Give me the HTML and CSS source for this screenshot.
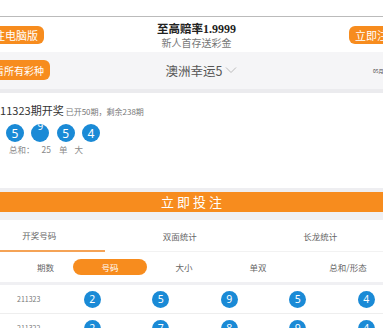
FILE: index.html
```html
<!DOCTYPE html>
<html lang="zh-CN">
<head>
  <meta charset="UTF-8">
  <meta name="viewport" content="width=device-width, initial-scale=1.0">
  <title>澳洲幸运5</title>
  <link rel="stylesheet" href="styles.css">
</head>
<body>
  <div class="page">
    <div class="top-gap"></div>
    <header class="head">
      <div class="cell-left"><a class="btn btn-pc" href="javascript:;">注电脑版</a></div>
      <div class="slogan">
        <b>至高赔率<span class="num">1.9999</span></b>
        <span class="sub">新人首存送彩金</span>
      </div>
      <div class="cell-right"><a class="btn btn-reg" href="javascript:;">立即注册</a></div>
    </header>

    <div class="lot-bar">
      <div class="cell-left"><a class="btn btn-all" href="javascript:;">看所有彩种</a></div>
      <div class="lot-name">澳洲幸运5
        <svg width="12" height="8" viewBox="0 0 12 8"><path d="M1 1.5 L6 6.5 L11 1.5" fill="none" stroke="#bbb" stroke-width="1"/></svg>
      </div>
      <div class="date">05月</div>
    </div>

    <section class="draw">
      <div class="draw-title"><span class="issue">211323期开奖</span><span class="count">已开50期，剩余238期</span></div>
      <div class="draw-balls">
        <span class="ball">5</span>
        <span class="ball roll"><i>9</i></span>
        <span class="ball">5</span>
        <span class="ball">4</span>
      </div>
      <div class="draw-sum">
        <span>总和：</span><span>25</span><span>单</span><span>大</span>
      </div>
    </section>

    <div class="bet">立即投注</div>

    <nav class="tabs">
      <a class="tab on" href="javascript:;"><span>开奖号码</span></a>
      <a class="tab" href="javascript:;"><span>双面统计</span></a>
      <a class="tab" href="javascript:;"><span>长龙统计</span></a>
    </nav>

    <div class="sub-tabs">
      <span class="st first">期数</span>
      <span class="st"><em class="pill">号码</em></span>
      <span class="st">大小</span>
      <span class="st">单双</span>
      <span class="st last">总和/形态</span>
    </div>

    <div class="rows">
      <div class="row">
        <span class="period">211323</span>
        <span class="cell"><b class="ball sm">2</b></span>
        <span class="cell"><b class="ball sm">5</b></span>
        <span class="cell"><b class="ball sm">9</b></span>
        <span class="cell"><b class="ball sm">5</b></span>
        <span class="cell"><b class="ball sm">4</b></span>
      </div>
      <div class="row">
        <span class="period">211322</span>
        <span class="cell"><b class="ball sm">2</b></span>
        <span class="cell"><b class="ball sm">7</b></span>
        <span class="cell"><b class="ball sm">8</b></span>
        <span class="cell"><b class="ball sm">9</b></span>
        <span class="cell"><b class="ball sm">4</b></span>
      </div>
    </div>
  </div>
</body>
</html>
```

FILE: styles.css
```css
*{
  margin:0;
  padding:0;
  box-sizing:border-box;
}
html,body{
  width:383px;
  overflow:hidden;
  background:#fff;
}
body{
  font-family:"Noto Sans CJK SC","Noto Sans",sans-serif;
  color:#333;
}
a{
  text-decoration:none;
  color:inherit;
}
.top-gap{
  height:17px;
  border-bottom:1px solid #bbb;
}
.btn{
  display:flex;
  align-items:center;
  justify-content:center;
  background:#f78c1e;
  color:#fff;
  border-radius:6px;
  white-space:nowrap;
}

/* header */
.head{
  display:grid;
  grid-template-columns:44px 1fr 34px;
  align-items:center;
  height:35px;
}
.btn-pc{
  width:56px;
  height:18px;
  margin-left:-12px;
  font-size:11px;
}
.btn-reg{
  width:56px;
  height:18px;
  font-size:11px;
}
.slogan{
  display:flex;
  flex-direction:column;
  align-items:center;
  line-height:14px;
  padding-top:1px;
}
.slogan b{
  font-size:11.5px;
  color:#222;
}
.slogan .num{
  font-family:"Liberation Serif",serif;
  font-size:12px;
}
.slogan .sub{
  font-size:10px;
  color:#777;
}

/* lottery bar */
.lot-bar{
  display:grid;
  grid-template-columns:50px 1fr 30px;
  align-items:center;
  height:41px;
  padding-bottom:1px;
  background:#f5f5f7;
  border-bottom:4px solid #ebebee;
}
.btn-all{
  width:62px;
  height:20px;
  margin-left:-12px;
  font-size:10px;
}
.lot-name{
  display:flex;
  align-items:center;
  justify-content:center;
  gap:3px;
  font-size:12.5px;
  color:#555;
}
.date{
  font-size:5px;
  color:#444;
  padding-left:20px;
  white-space:nowrap;
}

/* draw panel */
.draw{
  height:99px;
  padding-top:9px;
  border-bottom:4px solid #eeeef1;
}
.draw-title{
  display:flex;
  align-items:baseline;
  gap:2px;
  margin-left:-6px;
  white-space:nowrap;
}
.issue{
  font-size:11px;
  color:#333;
}
.count{
  font-size:8px;
  color:#777;
}
.draw-balls{
  display:flex;
  gap:7.3px;
  padding-left:6px;
  margin-top:6px;
}
.ball{
  display:flex;
  align-items:center;
  justify-content:center;
  width:18px;
  height:18px;
  border-radius:50%;
  background:#1a8ad6;
  color:#fff;
  font-size:12px;
  font-weight:normal;
  overflow:hidden;
  font-family:"Noto Sans",sans-serif;
}
.ball.roll i{
  font-style:normal;
  font-size:10px;
  transform:translateY(-7px);
}
.draw-sum{
  display:flex;
  gap:7px;
  padding-left:9px;
  margin-top:1px;
  font-size:8.5px;
  color:#888;
}
.draw-sum span:nth-child(2){
  margin-right:1px;
}

/* bet bar */
.bet{
  height:20px;
  background:#f78c1e;
  color:#fff;
  font-size:13px;
  letter-spacing:3px;
  text-align:center;
  line-height:20px;
  text-indent:3px;
}

/* tabs */
.tabs{
  display:grid;
  grid-template-columns:repeat(3,140.5px);
  margin-left:-31px;
  border-top:8px solid #f0f0f3;
  background:#fff;
}
.tab{
  display:flex;
  flex-direction:column;
  justify-content:center;
  height:32px;
  font-size:8.5px;
  color:#666;
  text-align:center;
  border-bottom:1px solid #f2f2f2;
}
.tab.on{
  border-bottom:2px solid #f5a356;
  margin-right:5px;
  padding-left:5px;
}

/* sub tabs */
.sub-tabs{
  display:grid;
  grid-template-columns:73px 74px 74px 74px 1fr;
  align-items:center;
  height:33px;
  border-bottom:3px solid #f0f0f3;
  font-size:8.5px;
  color:#666;
}
.st{
  text-align:center;
}
.st.first,
.st.last{
  padding-left:18px;
}
.pill{
  display:block;
  height:16px;
  line-height:16px;
  border-radius:8px;
  background:#f78c1e;
  color:#fff;
  font-style:normal;
}

/* result rows */
.row{
  display:grid;
  grid-template-columns:58px repeat(5,68.5px);
  align-items:center;
  height:29px;
  border-bottom:1px solid #eee;
}
.period{
  padding-left:17px;
  font-size:7px;
  color:#777;
}
.cell{
  display:flex;
  justify-content:center;
}
.ball.sm{
  width:17px;
  height:17px;
  font-size:10.5px;
}
```
